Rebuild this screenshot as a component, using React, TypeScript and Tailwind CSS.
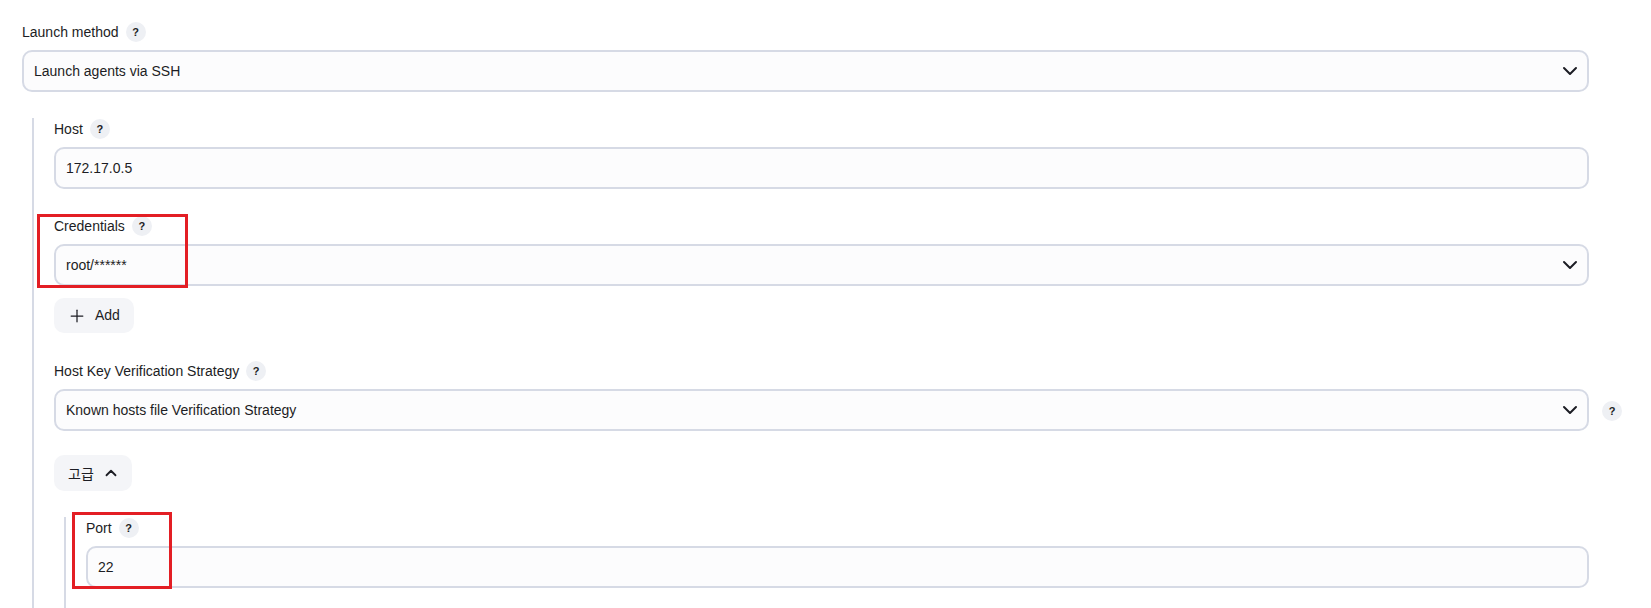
import { ChevronDown, ChevronUp, Plus } from 'lucide-react';

const font = { fontFamily: '"Liberation Sans", "Noto Sans CJK KR", sans-serif' };

function Help() {
  return (
    <span className="inline-flex h-5 w-5 items-center justify-center rounded-full bg-[#eef0f4] text-[11px] font-bold text-[#1c1d24]">
      ?
    </span>
  );
}

function Label({ text }: { text: string }) {
  return (
    <div className="flex h-[22px] items-center gap-[7px] text-[14px] text-[#1c1d24]">
      <span>{text}</span>
      <Help />
    </div>
  );
}

function Field({ value, select }: { value: string; select?: boolean }) {
  return (
    <div className="mt-[7px] flex h-[42px] items-center justify-between rounded-[10px] border-2 border-[#d6dae5] bg-[#fcfcfd] pl-[10px] pr-[5px] text-[14px] text-[#1c1d24]">
      <span>{value}</span>
      {select && <ChevronDown size={24} strokeWidth={2} className="text-[#1c1d24]" />}
    </div>
  );
}

export default function App() {
  return (
    <div className="h-[608px] w-[1651px] overflow-hidden bg-white" style={font}>
      <div className="ml-[22px] w-[1567px] pt-[21px]">
        <Label text="Launch method" />
        <Field value="Launch agents via SSH" select />

        <div className="relative mt-[26px] ml-[10px] border-l-2 border-[#d6dae5] pb-[20px] pl-[20px]">
          <Label text="Host" />
          <Field value="172.17.0.5" />

          <div className="relative mt-[26px]">
            <Label text="Credentials" />
            <Field value="root/******" select />
            <div className="absolute left-[-17px] top-[-1px] h-[74px] w-[151px] border-[3px] border-[#e31e24]" />
          </div>

          <button className="mt-[12px] flex h-[35px] w-[80px] items-center gap-[8px] rounded-[10px] bg-[#f4f5f8] pl-[13px] text-[14px] text-[#1c1d24]">
            <Plus size={20} strokeWidth={1.5} />
            <span>Add</span>
          </button>

          <div className="mt-[27px]">
            <Label text="Host Key Verification Strategy" />
            <div className="relative">
              <Field value="Known hosts file Verification Strategy" select />
              <div className="absolute left-full top-[9px] ml-[13px]">
                <Help />
              </div>
            </div>
          </div>

          <button className="mt-[24px] flex h-[36px] w-[78px] items-center gap-[8px] rounded-[10px] bg-[#f4f5f8] pl-[14px] text-[14px] text-[#1c1d24]">
            <span style={{ fontFamily: '"Noto Sans CJK KR", sans-serif' }}>고급</span>
            <ChevronUp size={18} strokeWidth={2.4} />
          </button>

          <div className="relative mt-[26px] ml-[10px] border-l-2 border-[#d6dae5] pb-[30px] pl-[20px]">
            <Label text="Port" />
            <Field value="22" />
            <div className="absolute left-[6px] top-[-5px] h-[77px] w-[100px] border-[3px] border-[#e31e24]" />
          </div>
        </div>
      </div>
    </div>
  );
}
